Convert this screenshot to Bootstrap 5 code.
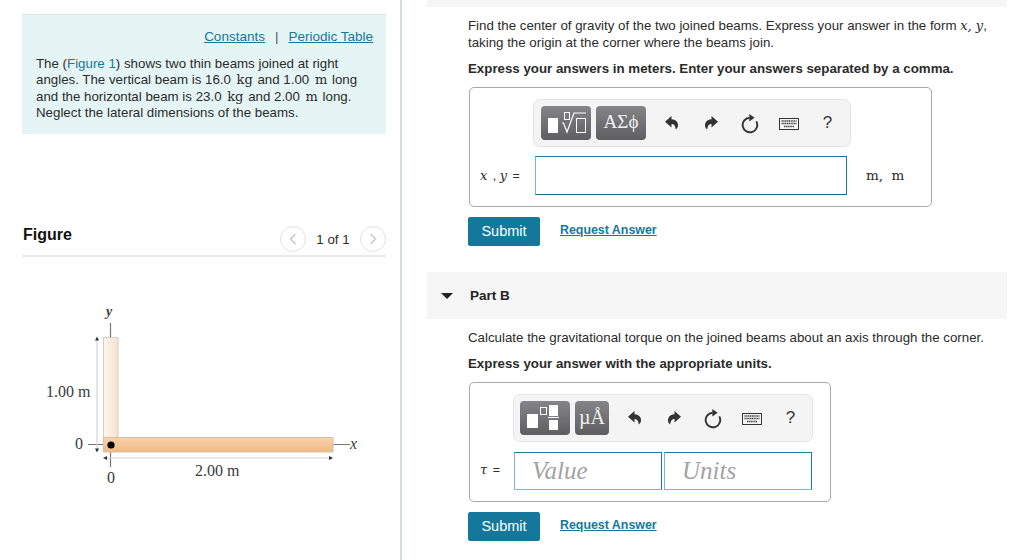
<!DOCTYPE html>
<html lang="en">

<head>
  <meta charset="UTF-8" />
  <meta name="viewport" content="width=device-width, initial-scale=1.0" />
  <title>Part A and Part B</title>
  <link href="https://cdn.jsdelivr.net/npm/bootstrap@5.3.0/dist/css/bootstrap.min.css" rel="stylesheet" />
  <style>
    html, body { height: 560px; overflow: hidden; }
    body { font-family: "Liberation Sans", Arial, sans-serif; font-size: 13.3px; line-height: 16.5px; color: #2b2b2b; background: #fff; }
    a { color: #14789a; }
    .math { font-family: "DejaVu Serif", "Liberation Serif", serif; font-size: 13px; line-height: 0; margin: 0 1px 0 2px; }
    .math-i { font-family: "DejaVu Serif", "Liberation Serif", serif; font-style: italic; font-size: 13px; line-height: 0; }

    .left-pane { width: 402px; height: 560px; flex: none; padding: 14px 14px 0 22px; border-right: 2px solid #d3dfe6; }
    .intro-box { height: 120px; background: #e5f5f6; border-top: 1px solid #e0e0e0; padding: 13px 13px 0 14px; line-height: 16.3px; }
    .intro-links { text-align: right; font-size: 13.5px; line-height: 17px; margin-bottom: 11px; }
    .intro-links i { font-style: normal; margin: 0 10px; color: #555; }
    .figure-head { height: 47px; margin-top: 76px; padding-top: 16px; border-bottom: 2px solid #eaeaea; }
    .figure-title { font-size: 16px; font-weight: 700; color: #111; margin: 1px 0 0 1px; }
    .pager-dot { width: 26px; height: 26px; border: 1px solid #e2e2e2; border-radius: 50%; }
    .pager-text { width: 54px; text-align: center; font-size: 13.3px; padding-top: 2px; }
    .beam-fig { display: block; margin: 43px 0 0 -2px; }
    .beam-fig text { font-family: "Liberation Serif", serif; font-size: 16px; fill: #3a3a3a; }
    .beam-fig .axis-y { font-size: 14px; font-style: italic; font-weight: 700; }
    .beam-fig .axis-x { font-style: italic; }

    .right-pane { width: 580px; margin-left: 25px; flex: none; }
    .top-band { height: 7px; background: #f6f6f6; }
    .part-body { padding-left: 41px; width: 560px; }
    .part-body p { margin: 0; white-space: nowrap; }
    .lead-a { padding-top: 11px; }
    .lead-b { padding-top: 11px; }
    .part-body .ask-text { margin: 10px 0 9px; font-weight: 700; }

    .answer-box { border: 1px solid #aaa; border-radius: 5px; height: 120px; padding: 11px 0 0 10px; margin-left: 1px; }
    .box-a { width: 463px; }
    .box-b { width: 362px; }
    .tool-strip { height: 48px; background: #f4f4f4; border: 1px solid #e4e4e4; border-radius: 7px; padding: 6px 0 0 7px; }
    .strip-a { width: 318px; margin-left: 53px; }
    .strip-b { width: 300px; margin-left: 33px; padding-left: 6px; }
    .tmpl-btn { height: 34px; width: 50px; border-radius: 4px; background: linear-gradient(#858588, #5e5e61); color: #f2f2f2; font-family: "Liberation Serif", serif; font-size: 19px; line-height: 32px; text-align: center; }
    .tmpl-btn + .tmpl-btn { margin-left: 5px; }
    .tmpl-units { width: 34px; font-size: 20px; }
    .tool-set { margin-left: 6px; }
    .tool-ico { width: 39px; height: 34px; padding-top: 2px; }
    .tool-help { font-size: 17px; color: #333; }

    .field-row { margin-top: 9px; }
    .strip-b + .field-row { margin-top: 10px; }
    .eq-a { width: 55px; font-size: 12.5px; padding-top: 2px; white-space: nowrap; }
    .eq-a .math-i { margin-right: 2px; }
    .eq-b { width: 34px; font-size: 12.5px; word-spacing: 2px; }
    .math-sym { font-size: 13px; }
    .answer-input { width: 312px; height: 39px; border: 1px solid #1b7a9b; border-left-color: #7db6c8; border-bottom-color: #1b6f8c; background: #fff; }
    .unit-note { font-family: "DejaVu Serif", "Liberation Serif", serif; font-size: 13.5px; word-spacing: 4px; margin-left: 19px; }
    .answer-input2 { border: 1px solid #1b7a9b; border-bottom-color: #7db6c8; border-left-color: #7db6c8; width: 148px; height: 38px; font-family: "Liberation Serif", serif; font-style: italic; font-size: 25px; line-height: 36px; color: #a3a3a3; padding-left: 17px; }
    .answer-input2 + .answer-input2 { margin-left: 2px; }

    .action-row { margin-top: 10px; }
    .submit-btn { --bs-btn-padding-x: 0; --bs-btn-padding-y: 0; --bs-btn-font-size: 14.5px; --bs-btn-bg: #14789a; --bs-btn-color: #fff; --bs-btn-border-radius: 2px; --bs-btn-border-color: #14789a; width: 72px; height: 29px; line-height: 27px; }
    .req-link { font-weight: 700; font-size: 12.4px; margin-left: 20px; margin-top: -2px; }
    .part-band { height: 47px; background: #f6f6f6; margin-top: 26px; padding: 2px 0 0 14px; }
    .part-band b { font-size: 13.5px; color: #222; margin-left: 17px; }
    .tri { width: 0; height: 0; border-left: 6px solid transparent; border-right: 6px solid transparent; border-top: 6px solid #222; }
  </style>
</head>

<body class="d-flex">
  <svg width="0" height="0" class="position-absolute">
    <symbol id="ico-undo" viewBox="0 0 16 18"><path d="M7.500 1 1 6.800 7.500 12.500V9c2.500 0 3.800 1.500 4.300 5.500 2.500-1.500 2.700-4.500 1.700-6.700C12.500 5.600 10.300 4.400 7.500 4.300z" fill="#333"/></symbol>
    <symbol id="ico-redo" viewBox="0 0 16 18"><path d="M8.500 1 15 6.800 8.500 12.500V9c-2.500 0-3.800 1.500-4.300 5.500-2.500-1.500-2.700-4.500-1.700-6.700C3.500 5.600 5.700 4.400 8.500 4.300z" fill="#333"/></symbol>
    <symbol id="ico-reset" viewBox="0 0 18 20"><path d="M15.300 7.400A7.300 7.300 0 1 1 8.500 3.700" fill="none" stroke="#333" stroke-width="1.900"/><path d="M8.300 0 13.600 3.800 8.300 7.500z" fill="#333"/></symbol>
    <symbol id="ico-keys" viewBox="0 0 20 12"><rect x="0.500" y="0.500" width="19" height="11" fill="#f6f6f6" stroke="#333"/><path d="M2.500 3H17.500M2.500 5.500H17.500M5 8.500H15" stroke="#444" stroke-width="1.400" stroke-dasharray="1.300 .5"/></symbol>
  </svg>

  <div class="left-pane">
    <div class="intro-box">
      <div class="intro-links"><a href="#">Constants</a><i>|</i><a href="#">Periodic Table</a></div>
      <div>The (<a href="#" class="text-decoration-none">Figure 1</a>) shows two thin beams joined at right angles. The vertical beam is 16.0 <span class="math">kg</span> and 1.00 <span class="math">m</span> long and the horizontal beam is 23.0 <span class="math">kg</span> and 2.00 <span class="math">m</span> long. Neglect the lateral dimensions of the beams.</div>
    </div>

    <div class="figure-head d-flex justify-content-between align-items-start">
      <div class="figure-title">Figure</div>
      <div class="d-flex align-items-center">
        <div class="pager-dot d-flex align-items-center justify-content-center">
          <svg width="8" height="12" viewBox="0 0 8 12"><path d="M6.500 1 1.500 6l5 5" fill="none" stroke="#c4c4c4" stroke-width="1.300"/></svg>
        </div>
        <div class="pager-text">1 of 1</div>
        <div class="pager-dot d-flex align-items-center justify-content-center">
          <svg width="8" height="12" viewBox="0 0 8 12"><path d="M1.500 1l5 5-5 5" fill="none" stroke="#c4c4c4" stroke-width="1.300"/></svg>
        </div>
      </div>
    </div>

    <!-- diagram origin sits at page x=20, y=300 -->
    <svg class="beam-fig" width="360" height="190" viewBox="20 300 360 190">
      <defs>
        <linearGradient id="vbeam" x1="0" x2="1" y1="0" y2="0"><stop offset="0" stop-color="#fbf6ee"/><stop offset="1" stop-color="#f6e3cf"/></linearGradient>
        <linearGradient id="hbeam" x1="0" x2="0" y1="0" y2="1"><stop offset="0" stop-color="#f8d3ab"/><stop offset="1" stop-color="#f2b884"/></linearGradient>
      </defs>
      <path d="M110.500 323V337M110.500 452V467M88 444.500H103M333 444.500H350" stroke="#777" stroke-width="1.200"/>
      <path d="M97 340V450M106 458H330" stroke="#d5d5d5" stroke-width="1.200"/>
      <path d="M97 336.500l-2 4h4zM97 452.500l-2-4h4zM103 458l4-2v4zM333 458l-4-2v4z" fill="#333"/>
      <rect x="103.500" y="337.500" width="14.500" height="100" fill="url(#vbeam)" stroke="#d9cdbf"/>
      <rect x="103.500" y="437.500" width="229.500" height="14.500" fill="url(#hbeam)" stroke="#d8bfa3"/>
      <circle cx="111" cy="445" r="3.600" fill="#000"/>
      <text x="106" y="316" class="axis-y">y</text>
      <text x="46" y="397">1.00 m</text>
      <text x="75" y="449">0</text>
      <text x="107" y="483">0</text>
      <text x="195" y="476">2.00 m</text>
      <text x="350" y="449" class="axis-x">x</text>
    </svg>
  </div>

  <div class="right-pane">
    <div class="top-band"></div>
    <div class="part-body">
      <p class="lead-a">Find the center of gravity of the two joined beams. Express your answer in the form <span class="math-i">x, y</span>,<br>taking the origin at the corner where the beams join.</p>
      <p class="ask-text">Express your answers in meters. Enter your answers separated by a comma.</p>

      <div class="answer-box box-a">
        <div class="tool-strip strip-a d-flex">
          <div class="tmpl-btn d-flex align-items-center justify-content-center">
            <svg width="42" height="30" viewBox="0 0 42 30"><rect x="3" y="10" width="10" height="15" fill="#fff"/><rect x="19.500" y="4.500" width="5" height="7" fill="none" stroke="#fff"/><path d="M17 15h1.500l3.500 9 7-19h12" fill="none" stroke="#fff" stroke-width="1.200"/><rect x="31.500" y="10.500" width="9" height="14" fill="none" stroke="#fff"/></svg>
          </div>
          <div class="tmpl-btn">ΑΣϕ</div>
          <div class="tool-set d-flex">
            <div class="tool-ico d-flex align-items-center justify-content-center"><svg width="16" height="18"><use href="#ico-undo"/></svg></div>
            <div class="tool-ico d-flex align-items-center justify-content-center"><svg width="16" height="18"><use href="#ico-redo"/></svg></div>
            <div class="tool-ico d-flex align-items-center justify-content-center"><svg width="18" height="20"><use href="#ico-reset"/></svg></div>
            <div class="tool-ico d-flex align-items-center justify-content-center"><svg width="20" height="12"><use href="#ico-keys"/></svg></div>
            <div class="tool-ico tool-help d-flex align-items-center justify-content-center">?</div>
          </div>
        </div>
        <div class="field-row d-flex align-items-center">
          <div class="eq-a"><span class="math-i math-sym">x</span> , <span class="math-i math-sym">y</span> =</div>
          <div class="answer-input"></div>
          <div class="unit-note">m, m</div>
        </div>
      </div>

      <div class="action-row d-flex align-items-center">
        <button class="btn submit-btn" type="button">Submit</button>
        <a href="#" class="req-link">Request Answer</a>
      </div>
    </div>

    <div class="part-band d-flex align-items-center">
      <div class="tri"></div>
      <b>Part B</b>
    </div>

    <div class="part-body">
      <p class="lead-b">Calculate the gravitational torque on the joined beams about an axis through the corner.</p>
      <p class="ask-text">Express your answer with the appropriate units.</p>

      <div class="answer-box box-b">
        <div class="tool-strip strip-b d-flex">
          <div class="tmpl-btn d-flex align-items-center justify-content-center">
            <svg width="42" height="30" viewBox="0 0 42 30"><rect x="3" y="11" width="11" height="14" fill="#fff"/><rect x="16.500" y="4.500" width="6" height="7" fill="none" stroke="#fff"/><rect x="25" y="2" width="9" height="11" fill="#fff"/><path d="M24 14.500H35" stroke="#fff" stroke-width="1.200"/><rect x="25" y="17" width="9" height="10" fill="#fff"/></svg>
          </div>
          <div class="tmpl-btn tmpl-units">µÅ</div>
          <div class="tool-set d-flex">
            <div class="tool-ico d-flex align-items-center justify-content-center"><svg width="16" height="18"><use href="#ico-undo"/></svg></div>
            <div class="tool-ico d-flex align-items-center justify-content-center"><svg width="16" height="18"><use href="#ico-redo"/></svg></div>
            <div class="tool-ico d-flex align-items-center justify-content-center"><svg width="18" height="20"><use href="#ico-reset"/></svg></div>
            <div class="tool-ico d-flex align-items-center justify-content-center"><svg width="20" height="12"><use href="#ico-keys"/></svg></div>
            <div class="tool-ico tool-help d-flex align-items-center justify-content-center">?</div>
          </div>
        </div>
        <div class="field-row d-flex align-items-center">
          <div class="eq-b"><span class="math-i math-sym">τ</span> =</div>
          <div class="answer-input2">Value</div>
          <div class="answer-input2">Units</div>
        </div>
      </div>

      <div class="action-row d-flex align-items-center">
        <button class="btn submit-btn" type="button">Submit</button>
        <a href="#" class="req-link">Request Answer</a>
      </div>
    </div>
  </div>

  <script src="https://cdn.jsdelivr.net/npm/bootstrap@5.3.0/dist/js/bootstrap.bundle.min.js"></script>
</body>

</html>
